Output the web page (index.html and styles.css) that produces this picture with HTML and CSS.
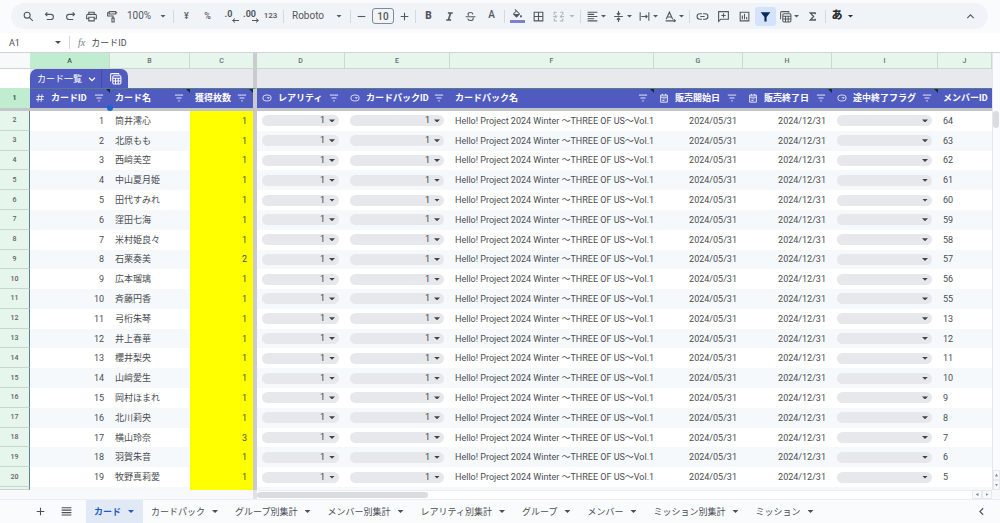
FILE: index.html
```html
<!DOCTYPE html>
<html lang="ja">
<head>
<meta charset="utf-8">
<title>カード一覧</title>
<link rel="stylesheet" href="styles.css">
</head>
<body>
<svg class="defs" aria-hidden="true">
  <symbol id="i-filter" viewBox="0 0 12 12"><path d="M1 2.500h10M3 6h6M5 9.500h2" fill="none" stroke="currentColor" stroke-width="1.200"/></symbol>
  <symbol id="i-chip" viewBox="0 0 12 12"><rect x="1" y="2.500" width="10" height="7" rx="3.500" fill="none" stroke="currentColor" stroke-width="1.100"/><path d="M5.500 5h4L7.500 7.300z" fill="currentColor"/></symbol>
  <symbol id="i-cal" viewBox="0 0 12 12"><path d="M2 2.500h8v8.500H2zM2 5h8M4 1v2M8 1v2" fill="none" stroke="currentColor" stroke-width="1.200"/><path d="M4 6.500h4v1H4zM4 8.500h2.500v1H4z" fill="currentColor"/></symbol>
  <symbol id="i-hash" viewBox="0 0 12 12"><path d="M4.800 1.500l-1.300 9M8.500 1.500l-1.300 9M1.800 4.300h9M1.200 7.700h9" fill="none" stroke="currentColor" stroke-width="1.200"/></symbol>
  <symbol id="i-table" viewBox="0 0 24 24"><path d="M3 17V5a2 2 0 0 1 2-2h13v2" fill="none" stroke="currentColor" stroke-width="2"/><path d="M7 9a2 2 0 0 1 2-2h11a2 2 0 0 1 2 2v11a2 2 0 0 1-2 2H9a2 2 0 0 1-2-2zM7 11.500h15M7 16.500h15M12 11.500V22M17 11.500V22" fill="none" stroke="currentColor" stroke-width="1.900"/></symbol>
</svg>

<header class="toolbar-area">
  <div class="toolbar" role="toolbar" aria-label="ツールバー">
    <button class="tool" aria-label="検索"><svg class="icon" viewBox="0 0 24 24"><circle cx="9.500" cy="9.500" r="5.500"/><path d="M13.500 13.500l6.500 6.500"/></svg></button>
    <button class="tool" aria-label="元に戻す"><svg class="icon" viewBox="0 0 24 24"><path d="M8 4.500L4.500 8 8 11.500M5 8h9.500a4.500 4.500 0 0 1 0 9.500H7"/></svg></button>
    <button class="tool" aria-label="やり直し"><svg class="icon" viewBox="0 0 24 24"><path d="M16 4.500L19.500 8 16 11.500M19 8H9.500a4.500 4.500 0 0 0 0 9.500H17"/></svg></button>
    <button class="tool" aria-label="印刷"><svg class="icon" viewBox="0 0 24 24"><path d="M7 8V4h10v4M6.500 16H3v-5.500A2.500 2.500 0 0 1 5.500 8h13a2.500 2.500 0 0 1 2.500 2.500V16h-3.500M7 13.500h10V20H7z"/></svg></button>
    <button class="tool" aria-label="書式を貼り付け"><svg class="icon" viewBox="0 0 24 24"><path d="M6 3h12v4.500H6zM6 5H3v6h10v4M11 15h4v7h-4zM18 5h3"/></svg></button>
    <button class="tool zoom">100%<i class="caret"></i></button>
    <span class="sep"></span>
    <button class="tool small">¥</button>
    <button class="tool small">%</button>
    <button class="tool dec" aria-label="小数点以下の桁数を減らす">.0<svg class="arrow" viewBox="0 0 8 5"><path d="M8 2.500H2M4 .5L1.500 2.500 4 4.500"/></svg></button>
    <button class="tool dec" aria-label="小数点以下の桁数を増やす">.00<svg class="arrow" viewBox="0 0 8 5"><path d="M0 2.500h6M4 .5l2.500 2L4 4.500"/></svg></button>
    <button class="tool digits">123</button>
    <span class="sep"></span>
    <button class="tool font">Roboto<i class="caret"></i></button>
    <span class="sep"></span>
    <button class="tool step" aria-label="縮小"><svg class="icon" viewBox="0 0 24 24"><path d="M5 12h14"/></svg></button>
    <input class="size" value="10" aria-label="フォントサイズ">
    <button class="tool step" aria-label="拡大"><svg class="icon" viewBox="0 0 24 24"><path d="M5 12h14M12 5v14"/></svg></button>
    <span class="sep"></span>
    <button class="tool bold">B</button>
    <button class="tool" aria-label="斜体"><svg class="icon heavy" viewBox="0 0 24 24"><path d="M9 5.500h9M6 18.500h9M14 5.500l-4 13"/></svg></button>
    <button class="tool" aria-label="取り消し線"><svg class="icon" viewBox="0 0 24 24"><path d="M3 12.500h18M16.500 8c-.5-2.500-2.500-3.500-4.500-3.500-2.500 0-4.500 1.200-4.500 3.500 0 1 .5 1.800 1.300 2.400M7 16c.5 2.500 2.500 3.500 5 3.500s5-1.200 5-3.500c0-1-.3-1.500-.8-2"/></svg></button>
    <button class="tool color">A</button>
    <span class="sep"></span>
    <button class="tool fill" aria-label="塗りつぶしの色"><svg class="icon solid" viewBox="0 0 24 20"><path d="M16.560 8.940L7.620 0 6.210 1.410l2.380 2.380-5.150 5.150a1.490 1.490 0 0 0 0 2.120l5.500 5.500c.29.29.68.44 1.060.44s.77-.15 1.060-.44l5.500-5.500c.59-.58.59-1.530 0-2.120zM5.210 10L10 5.210 14.790 10zM19 11.500s-2 2.170-2 3.500a2 2 0 0 0 4 0c0-1.330-2-3.500-2-3.500z"/></svg></button>
    <button class="tool" aria-label="枠線"><svg class="icon" viewBox="0 0 24 24"><path d="M4 4h16v16H4zM4 12h16M12 4v16"/></svg></button>
    <button class="tool merge" disabled aria-label="セルを結合"><svg class="icon" viewBox="0 0 24 24"><path d="M9 4H4v5M15 4h5v5M9 20H4v-5M15 20h5v-5M2 12h6M22 12h-6M6 9.500L8.500 12 6 14.500M18 9.500L15.500 12l2.500 2.500"/></svg><i class="caret"></i></button>
    <span class="sep"></span>
    <button class="tool menu" aria-label="水平方向の配置"><svg class="icon" viewBox="0 0 24 24"><path d="M3 4h18M3 8h12M3 12h18M3 16h12M3 20h18"/></svg><i class="caret"></i></button>
    <button class="tool menu" aria-label="垂直方向の配置"><svg class="icon" viewBox="0 0 24 24"><path d="M4 12h16M12 2v6M9 6l3 3 3-3M12 22v-6M9 18l3-3 3 3"/></svg><i class="caret"></i></button>
    <button class="tool menu" aria-label="テキストを折り返す"><svg class="icon" viewBox="0 0 24 24"><path d="M4 4v16M20 4v16M6 12h11M14 9l3 3-3 3"/></svg><i class="caret"></i></button>
    <button class="tool menu" aria-label="テキストの回転"><svg class="icon" viewBox="0 0 24 24"><path d="M4 17L10 4l6 13M6.500 13h7M3 20h17M18 17l3 3-3 2"/></svg><i class="caret"></i></button>
    <span class="sep"></span>
    <button class="tool" aria-label="リンクを挿入"><svg class="icon" viewBox="0 0 24 24"><path d="M11 7H7a5 5 0 0 0 0 10h4M13 7h4a5 5 0 0 1 0 10h-4M8 12h8"/></svg></button>
    <button class="tool" aria-label="コメントを挿入"><svg class="icon" viewBox="0 0 24 24"><path d="M3 21V3h18v14H7zM12 6v8M8 10h8"/></svg></button>
    <button class="tool" aria-label="グラフを挿入"><svg class="icon" viewBox="0 0 24 24"><path d="M4 4h16v16H4zM8 10v7M12 7v10M16 13v4"/></svg></button>
    <button class="tool active" aria-label="フィルタ"><svg class="icon solid" viewBox="0 0 24 24"><path d="M3 4h18l-7 9v8h-4v-8z"/></svg></button>
    <button class="tool menu" aria-label="テーブル表示"><svg class="icon"><use href="#i-table"/></svg><i class="caret"></i></button>
    <button class="tool" aria-label="関数"><svg class="icon sigma" viewBox="0 0 24 24"><path d="M17 8V5.500H8l6 6.500-6 6.500h9V16"/></svg></button>
    <span class="sep"></span>
    <button class="tool ime">あ<i class="caret"></i></button>
    <button class="tool collapse" aria-label="メニューを非表示"><svg class="icon" viewBox="0 0 24 24"><path d="M6 15l6-6 6 6"/></svg></button>
  </div>
</header>

<div class="formula">
  <button class="namebox">A1<i class="caret"></i></button>
  <span class="sep"></span>
  <label class="fx" for="fx">fx</label>
  <input id="fx" class="fx-input" value="カードID">
</div>

<main class="sheet">
  <table class="grid">
    <thead>
      <tr class="cols"><th class="corner"></th><th class="picked">A</th><th>B</th><th class="frozen">C</th><th>D</th><th>E</th><th>F</th><th>G</th><th>H</th><th>I</th><th>J</th></tr>
      <tr class="banner">
        <th class="corner"></th>
        <th class="frozen"><div class="table-tab"><button class="table-name">カード一覧<svg class="chev" viewBox="0 0 12 12"><path d="M2.500 4.500L6 8l3.500-3.500"/></svg></button><button class="table-view" aria-label="表示"><svg class="icon"><use href="#i-table"/></svg></button></div></th>
        <th class="rest"></th>
      </tr>
      <tr class="names">
        <th class="num">1</th>
        <th class="note current"><svg><use href="#i-hash"/></svg><span>カードID</span><svg><use href="#i-filter"/></svg></th>
        <th class="note"><span>カード名</span><svg><use href="#i-filter"/></svg></th>
        <th class="note frozen"><span>獲得枚数</span><svg><use href="#i-filter"/></svg></th>
        <th><svg><use href="#i-chip"/></svg><span>レアリティ</span><svg><use href="#i-filter"/></svg></th>
        <th><svg><use href="#i-chip"/></svg><span>カードパックID</span><svg><use href="#i-filter"/></svg></th>
        <th class="note"><span>カードパック名</span><svg><use href="#i-filter"/></svg></th>
        <th><svg><use href="#i-cal"/></svg><span>販売開始日</span><svg><use href="#i-filter"/></svg></th>
        <th class="note"><svg><use href="#i-cal"/></svg><span>販売終了日</span><svg><use href="#i-filter"/></svg></th>
        <th class="note"><svg><use href="#i-chip"/></svg><span>途中終了フラグ</span><svg><use href="#i-filter"/></svg></th>
        <th><span>メンバーID</span></th>
      </tr>
    </thead>
    <tbody id="rows"></tbody>
  </table>
  <div class="vscroll"><div class="vtrack"><div class="vthumb"></div></div><button class="nub" aria-label="上へ"><i class="nub-up"></i></button><button class="nub" aria-label="下へ"><i class="nub-down"></i></button></div>
</main>

<div class="hscroll"><div class="htrack"><div class="hthumb"></div></div><button class="nub" aria-label="左へ"><i class="nub-left"></i></button><button class="nub" aria-label="右へ"><i class="nub-right"></i></button><span class="hend"></span></div>

<footer class="tabs">
  <button class="tabtool" aria-label="シートを追加"><svg class="icon" viewBox="0 0 24 24"><path d="M5 12h14M12 5v14"/></svg></button>
  <button class="tabtool" aria-label="すべてのシート"><svg class="icon" viewBox="0 0 24 24"><path d="M3 5h18M3 9.500h18M3 14h18M3 18.500h18"/></svg></button>
  <nav class="tablist">
    <button class="tab on">カード<i class="caret"></i></button>
    <button class="tab">カードパック<i class="caret"></i></button>
    <button class="tab">グループ別集計<i class="caret"></i></button>
    <button class="tab">メンバー別集計<i class="caret"></i></button>
    <button class="tab">レアリティ別集計<i class="caret"></i></button>
    <button class="tab">グループ<i class="caret"></i></button>
    <button class="tab">メンバー<i class="caret"></i></button>
    <button class="tab">ミッション別集計<i class="caret"></i></button>
    <button class="tab">ミッション<i class="caret"></i></button>
  </nav>
  <button class="tabtool side" aria-label="サイドパネルを表示"><svg class="icon" viewBox="0 0 24 24"><path d="M15 6l-6 6 6 6"/></svg></button>
</footer>
<script src="app.js"></script>
</body>
</html>
```

FILE: styles.css
```css
* { box-sizing: border-box; }
html, body { height: 100%; }
body {
  margin: 0;
  display: flex;
  flex-direction: column;
  overflow: hidden;
  background: #fff;
  color: #4b4e52;
  font: 9px/12px Roboto, "Noto Sans CJK JP", sans-serif;
}
button, input, select { font: inherit; color: inherit; border: 0; background: none; padding: 0; margin: 0; border-radius: 0; }
svg { flex: none; }
.defs { position: absolute; width: 0; height: 0; }

.icon { width: 13px; height: 13px; fill: none; stroke: currentColor; stroke-width: 2; }
.icon.solid { fill: currentColor; stroke: none; }
.icon.heavy { stroke-width: 3; }
.icon.sigma { stroke-width: 2.5; }
.caret { flex: none; width: 6px; height: 3px; background: currentColor; clip-path: polygon(0 0, 100% 0, 50% 100%); }
.sep { flex: none; width: 1px; height: 13px; margin: 0 2px; background: #d5d9df; }

/* Toolbar */
.toolbar-area { flex: none; padding: 3px 12px 4px 11px; background: #f9fbfd; }
.toolbar { display: flex; align-items: center; height: 26px; padding: 0 7px; border-radius: 13px; background: #f0f4f9; color: #54575b; font-size: 10px; }
.tool { display: flex; flex: none; align-items: center; justify-content: center; width: 21px; height: 19px; }
.tool.zoom { width: 48px; padding: 0 5px 0 4px; justify-content: space-between; }
.tool.font { width: 62px; padding: 0 6px; justify-content: space-between; }
.tool.small { font-size: 9px; font-weight: 500; }
.tool.dec { flex-direction: column; align-items: center; font-size: 9px; line-height: 8px; font-weight: 700; }
.arrow { width: 8px; height: 5px; align-self: flex-end; fill: none; stroke: currentColor; stroke-width: 1; }
.tool.digits { font-size: 8px; font-weight: 500; }
.tool.step { width: 17px; }
.size { width: 22px; height: 16px; margin: 0 2px; border: 1px solid #85888c; border-radius: 3px; text-align: center; font-weight: 500; }
.bold { font-weight: 900; }
.tool.color { padding-bottom: 2px; font-weight: 500; }
.tool.fill { padding: 0 3px; flex-direction: column; }
.tool.fill::after { content: ""; width: 15px; height: 3px; margin-top: 1px; background: #7c80cf; }
.tool.fill .icon { height: 10px; }
.tool.merge { width: 29px; gap: 4px; color: #b4b7bb; }
.tool.menu { width: 26px; gap: 2px; }
.tool.active { border-radius: 3px; background: #d3e3fd; color: #0b2a55; }
.tool.ime { width: 29px; gap: 5px; font-size: 11px; font-weight: 900; color: #2a2c2f; }
.tool.collapse { margin-left: auto; }

/* Formula bar */
.formula { display: flex; flex: none; align-items: center; height: 19px; padding-left: 9px; }
.namebox { display: flex; align-items: center; justify-content: space-between; width: 52px; margin-right: 6px; }
.fx { margin: 0 6px; font: italic 10px/12px "Liberation Serif", serif; color: #7a7d81; }
.fx-input { flex: 1; min-width: 0; }

/* Sheet */
.sheet { display: flex; flex: 1; min-height: 0; border-top: 1px solid #d0d4d8; }
.grid { display: flex; flex: 1; flex-direction: column; min-width: 0; }
.grid thead { display: block; flex: none; border-bottom: 3px solid #c3c5c8; }
.grid tbody { display: grid; flex: 1; min-height: 0; grid-template-rows: repeat(19, minmax(0, 1fr)) 3px; }
.grid tr { display: grid; grid-template-columns: 30px 80px 80px 67px 88px 105px minmax(0, 1fr) 89px 89px 106px 54px; min-height: 0; }
.grid th, .grid td { display: flex; align-items: center; min-width: 0; min-height: 0; padding: 0 6px 0 5px; white-space: nowrap; overflow: hidden; }
.grid .frozen { border-right: 4px solid #c9cbce; }

.cols { height: 16px; }
.grid .cols th { justify-content: center; padding: 0; background: #e6f6ec; border-bottom: 1px solid #cbd8d0; font-size: 7px; font-weight: 500; color: #666a6e; }
.grid .cols th + th { border-right: 1px solid #cbd8d0; }
.grid .cols th.frozen { border-right: 4px solid #c9cbce; }
.grid .cols th.corner { background: #f8f9fa; }
.grid .cols th.picked { background: #c0eccf; color: #34583f; }

.grid .banner { height: 19px; grid-template-columns: 30px 227px minmax(0, 1fr); }
.grid .banner th { padding: 0; background: #e7e9ed; }
.grid .banner th.corner { background: #fff; }
.table-tab { display: flex; height: 19px; border-radius: 7px 7px 0 0; background: #505bc0; color: #fff; overflow: hidden; }
.table-name { display: flex; align-items: center; gap: 5px; width: 72px; padding-left: 7px; border-right: 1px solid #434da8; font-weight: 400; }
.chev { width: 10px; height: 10px; fill: none; stroke: currentColor; stroke-width: 1.5; }
.table-view { display: flex; align-items: center; justify-content: center; width: 26px; }

.names { height: 20px; }
.grid .names th { position: relative; gap: 6px; padding-bottom: 1px; overflow: visible; background: #505bc0; border-top: 1px solid #567a86; color: #fff; font-weight: 700; }
.grid .names th.num { justify-content: center; background: #c0eccf; border-top-color: #c0eccf; color: #34583f; font-size: 7px; }
.names svg { width: 10px; height: 10px; opacity: .85; }
.names span { flex: 1; text-align: left; }
.names .note::before { content: ""; position: absolute; top: 0; right: 0; width: 4px; height: 4px; background: #12302a; clip-path: polygon(0 0, 100% 0, 100% 100%); }
.names .current::after { content: ""; position: absolute; z-index: 1; right: -3px; bottom: -3px; width: 6px; height: 6px; border-radius: 50%; background: #1a67d2; }

.data:nth-child(even) { background: #f6f9fb; }
.grid .data th { justify-content: center; padding: 0; background: #e6f6ec; border-bottom: 1px solid #c6d6cc; border-right: 1px solid #5c7f92; font-size: 7px; font-weight: 500; color: #5f6367; }
.grid .data .number { justify-content: flex-end; }
.grid .data .count { justify-content: flex-end; background: #ff0; }
.chip { position: relative; display: flex; flex: 1; align-items: center; min-width: 0; color: #3f4246; }
.chip select { appearance: none; width: 100%; height: 11px; padding-right: 14px; border-radius: 6px; background: #e6e8eb; line-height: 11px; text-align-last: right; }
.chip .caret { position: absolute; right: 4px; }

/* Scroll bars */
.vscroll { display: flex; flex: none; flex-direction: column; width: 8px; background: #fafbfc; border-left: 1px solid #e4e6e9; }
.vtrack { flex: 1; padding-top: 58px; }
.vthumb { width: 6px; height: 17px; border-radius: 3px; background: #dadce0; }
.nub { display: flex; flex: none; align-items: center; justify-content: center; border: 1px solid #e6e8ea; background: #f8f9fa; color: #85888c; }
.vscroll .nub { height: 10px; }
.nub i { width: 3px; height: 3px; background: currentColor; }
.nub-up { clip-path: polygon(50% 0, 100% 100%, 0 100%); }
.nub-down { clip-path: polygon(0 0, 100% 0, 50% 100%); }
.nub-left { clip-path: polygon(100% 0, 100% 100%, 0 50%); }
.nub-right { clip-path: polygon(0 0, 100% 50%, 0 100%); }
.hscroll { display: flex; flex: none; height: 9px; padding-left: 253px; background: #f8f9fa; }
.htrack { flex: 1; padding: 1px 4px 1px 0; border-left: 4px solid #e0e2e5; border-top: 1px solid #eceef0; background: #fff; }
.hthumb { width: 24%; height: 6px; border-radius: 3px; background: #dadce0; }
.hscroll .nub { width: 10px; }
.hend { width: 8px; }

/* Sheet tabs */
.tabs { display: flex; flex: none; align-items: center; height: 24px; padding: 0 6px 0 27px; background: #f9fbfd; border-top: 1px solid #eceef1; }
.tabtool { display: flex; flex: none; align-items: center; justify-content: center; width: 26px; height: 23px; }
.tablist { display: flex; flex: 1; min-width: 0; padding-left: 7px; }
.tab { display: flex; flex: none; align-items: center; gap: 7px; height: 23px; padding: 0 9px 0 8px; white-space: nowrap; }
.tab.on { background: #e1e9f7; color: #1f5bc4; font-weight: 700; }
```

FILE: app.js
```js
const members = [
  ['筒井澪心', 1, 64], ['北原もも', 1, 63], ['西﨑美空', 1, 62], ['中山夏月姫', 1, 61],
  ['田代すみれ', 1, 60], ['窪田七海', 1, 59], ['米村姫良々', 1, 58], ['石栗奏美', 2, 57],
  ['広本瑠璃', 1, 56], ['斉藤円香', 1, 55], ['弓桁朱琴', 1, 13], ['井上春華', 1, 12],
  ['櫻井梨央', 1, 11], ['山﨑愛生', 1, 10], ['岡村ほまれ', 1, 9], ['北川莉央', 1, 8],
  ['横山玲奈', 3, 7], ['羽賀朱音', 1, 6], ['牧野真莉愛', 1, 5]
];

const chip = (label, value) =>
  `<td><span class="chip"><select aria-label="${label}"><option>${value}</option></select><i class="caret"></i></span></td>`;

const rows = members.map(([name, count, id], i) => `<tr class="data">
  <th>${i + 2}</th><td class="number">${i + 1}</td><td>${name}</td><td class="count frozen">${count}</td>
  ${chip('レアリティ', '1')}${chip('カードパックID', '1')}
  <td>Hello! Project 2024 Winter ～THREE OF US～Vol.1</td>
  <td class="number">2024/05/31</td><td class="number">2024/12/31</td>
  ${chip('途中終了フラグ', '')}<td>${id}</td></tr>`);

rows.push('<tr class="data"><th></th><td></td><td></td><td class="count frozen"></td></tr>');
document.getElementById('rows').innerHTML = rows.join('');
```
